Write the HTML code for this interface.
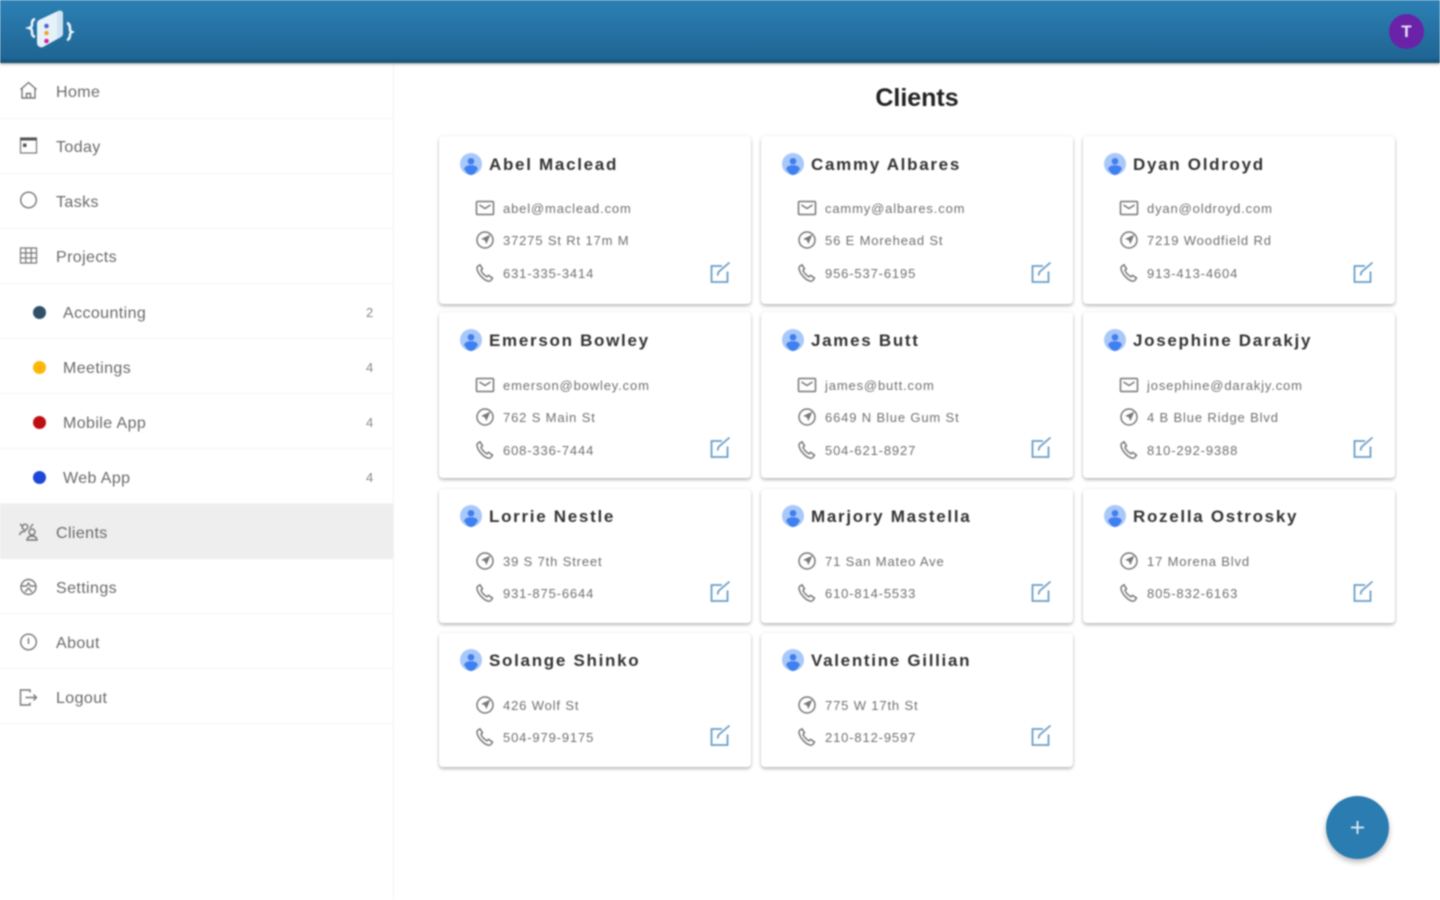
<!DOCTYPE html>
<html lang="en"><head><meta charset="utf-8"><title>Clients</title>
<style>
*{box-sizing:border-box}
html,body{margin:0;width:1440px;height:900px;overflow:hidden;background:#fff;font-family:"Liberation Sans",sans-serif}
#w{position:relative;width:1440px;height:900px;filter:blur(.7px);overflow:hidden}
.a{position:absolute}
header{position:absolute;left:0;top:0;width:1440px;height:63px;background:linear-gradient(#2c80b4,#1f6594 92%,#12516f);box-shadow:0 1px 3px rgba(0,0,0,.35);z-index:3}
aside{position:absolute;left:0;top:0;width:394px;height:900px;border-right:1px solid #f3f3f3}
.i{position:absolute;left:0;width:393px;height:55px;border-bottom:1px solid #f6f6f6;color:#6a6a6a;font-size:16px;letter-spacing:.4px}
.i span{position:absolute;left:56px;top:50%;transform:translateY(-50%);margin-top:2px;white-space:nowrap}
.i.s span{left:63px}
.i.d span{margin-top:3px}
.i svg{position:absolute;left:17px;top:15px;width:23px;height:23px;fill:none;stroke:#777;stroke-width:1.4}
.i.d svg{top:17px}
.i.k svg{top:16px}
.i i{position:absolute;left:33px;top:22px;width:13px;height:13px;border-radius:50%}
.i b{position:absolute;left:366px;top:21px;font-weight:normal;font-size:13px;letter-spacing:0;color:#888}
.c{position:absolute;width:312px;background:#fff;border-radius:4px;box-shadow:0 2px 3px rgba(0,0,0,.25),0 0 4px rgba(0,0,0,.07)}
.n{position:absolute;left:50px;margin-top:1px;font-weight:bold;font-size:17px;letter-spacing:1.7px;color:#333;white-space:nowrap;line-height:20px}
.t{position:absolute;left:64px;margin-top:1px;font-size:13px;letter-spacing:.85px;color:#707070;white-space:nowrap;line-height:16px}
.c svg{position:absolute;fill:none;stroke:#777;stroke-width:1.5}
.c svg.u{left:21px;width:22px;height:22px;stroke:none}
.c svg.m{left:36px;width:20px;height:20px}
.c svg.e{left:268px;width:26px;height:26px;stroke:#6a9fc8;stroke-width:1.8}
.c.r svg.e{left:267px}
</style></head><body>
<svg width="0" height="0" style="position:absolute">
<symbol id="u" viewBox="0 0 24 24"><circle cx="12" cy="12" r="12" fill="#a9c8fa"/><circle cx="12" cy="9" r="3.600" fill="#3f7ff0"/><path d="M4.500 17c1-2.600 4-3.600 7.500-3.600s6.500 1 7.500 3.600c-1.800 3.600-4.500 7-7.500 7s-5.700-3.400-7.500-7z" fill="#3f7ff0"/></symbol>
<symbol id="mail" viewBox="0 0 20 20"><rect x="1.500" y="3.500" width="17" height="13" rx="1"/><path d="M4.500 7l5.500 3.500L15.500 7"/></symbol>
<symbol id="loc" viewBox="0 0 20 20"><circle cx="10" cy="10" r="8"/><path d="M14 6l-6 2.800 2.400 1 1 2.400z" fill="#777"/></symbol>
<symbol id="ph" viewBox="0 0 20 20"><path d="M2.500 3.500L5 1.800l2.500 4-1.500 1.500c.8 2.500 3.500 5.300 6 6.500l1.600-1.500 3.900 2.800-1.700 2.400c-1 1-3 .8-5.300-.4C7 15 3.800 11 2.600 8 1.900 6 1.800 4.500 2.500 3.500z"/></symbol>
<symbol id="ed" viewBox="0 0 26 26"><path d="M15 6H4.500v16h16V11.500"/><path d="M10.500 15.500l1-3.500L22.500 2.500"/></symbol>
</svg>
<div id="w">
<header>
<svg class="a" style="left:24px;top:8px" width="54" height="44" viewBox="0 0 54 44">
<path d="M11 11c-3 1-3 3-3 5s0 3-3 4c3 1 3 2 3 4s0 4 3 5" fill="none" stroke="#eaf4fb" stroke-width="2.600"/>
<path d="M43 15c3 1 3 4 3 6s0 2 2 3c-2 1-2 2-2 3s0 4-3 5" fill="none" stroke="#eaf4fb" stroke-width="2.600"/>
<path d="M13 15c0-1 1-2 2-3l19-9c3-1 5 0 5 3v20c0 1-1 2-2 3l-18 10c-3 1-6-1-6-4z" fill="#e6f2fa"/>
<path d="M33 3.500c4-1 6 0 6 3v19c0 1-1 2-2 3l-4 2z" fill="#cfe4f1"/>
<circle cx="22.500" cy="18" r="2.300" fill="#4f63d8"/><circle cx="22.500" cy="25" r="2.300" fill="#f2a32c"/><circle cx="22.500" cy="33" r="2.300" fill="#d81e9a"/>
</svg>
<div class="a" style="left:1389px;top:14px;width:35px;height:35px;border-radius:50%;background:#6a22a8;color:#e9def5;font-size:17px;font-weight:bold;text-align:center;line-height:35px">T</div>
</header>
<aside>
<div class="i" style="top:64px"><svg viewBox="0 0 23 23"><path d="M3.500 10.500L11.500 3.500l8 7M5 9.500V19h13V9.500M9.500 19v-4.500h4V19"/></svg><span>Home</span></div>
<div class="i" style="top:119px"><svg viewBox="0 0 23 23"><rect x="3.500" y="4" width="16" height="15" stroke-width="1.200"/><path d="M3.500 5h16" stroke-width="3" stroke="#555"/><rect x="6" y="9.500" width="3.500" height="3.500" fill="#555" stroke="none"/></svg><span>Today</span></div>
<div class="i" style="top:174px"><svg viewBox="0 0 23 23"><circle cx="11.500" cy="11" r="7.800"/></svg><span>Tasks</span></div>
<div class="i" style="top:229px"><svg viewBox="0 0 23 23"><path d="M3.500 4h16v15h-16zM3.500 9h16M3.500 14h16M8.800 4v15M14.200 4v15" stroke-width="1.200"/></svg><span>Projects</span></div>
<div class="i s d" style="top:284px"><i style="background:#2f5068"></i><span>Accounting</span><b>2</b></div>
<div class="i s d" style="top:339px"><i style="background:#ffb707"></i><span>Meetings</span><b>4</b></div>
<div class="i s d" style="top:394px"><i style="background:#c00d12"></i><span>Mobile App</span><b>4</b></div>
<div class="i s d" style="top:449px"><i style="background:#1c47d8"></i><span>Web App</span><b>4</b></div>
<div class="i k" style="top:504px;background:#eee;border:0"><svg viewBox="0 0 23 23"><circle cx="8" cy="7" r="2.800"/><circle cx="15" cy="12" r="3"/><path d="M2.500 15c1-3 3-4 6-3.500M10 20c.5-3 2.500-4 5-4s4.500 1 5 4zM3 4l3 3M13 8l3-4"/></svg><span>Clients</span></div>
<div class="i d" style="top:559px"><svg viewBox="0 0 23 23"><circle cx="11.500" cy="11" r="7.500"/><path d="M4.500 10h5l2-3 2 3h5M8 16l3.500-4 3.500 4"/></svg><span>Settings</span></div>
<div class="i d" style="top:614px"><svg viewBox="0 0 23 23"><circle cx="11.500" cy="11" r="7.800"/><path d="M11.500 7v6"/></svg><span>About</span></div>
<div class="i d" style="top:669px"><svg viewBox="0 0 23 23"><path d="M13 6.500V4H3.500v15H13v-2.500M8.500 11.500h11M16.500 8.500l3 3-3 3"/></svg><span>Logout</span></div>
</aside>
<div class="a" style="left:394px;top:84px;width:1046px;text-align:center;font-size:25px;font-weight:bold;color:#222;line-height:28px">Clients</div>

<div class="c" style="left:439px;top:136px;height:168px"><svg class="u" style="top:17px"><use href="#u"/></svg><div class="n" style="top:18px">Abel Maclead</div>
<svg class="m" style="top:62px"><use href="#mail"/></svg><div class="t" style="top:64px">abel@maclead.com</div>
<svg class="m" style="top:94px"><use href="#loc"/></svg><div class="t" style="top:96px">37275 St Rt 17m M</div>
<svg class="m" style="top:127px"><use href="#ph"/></svg><div class="t" style="top:129px">631-335-3414</div>
<svg class="e" style="top:124px"><use href="#ed"/></svg></div>

<div class="c r" style="left:761px;top:136px;height:168px"><svg class="u" style="top:17px"><use href="#u"/></svg><div class="n" style="top:18px">Cammy Albares</div>
<svg class="m" style="top:62px"><use href="#mail"/></svg><div class="t" style="top:64px">cammy@albares.com</div>
<svg class="m" style="top:94px"><use href="#loc"/></svg><div class="t" style="top:96px">56 E Morehead St</div>
<svg class="m" style="top:127px"><use href="#ph"/></svg><div class="t" style="top:129px">956-537-6195</div>
<svg class="e" style="top:124px"><use href="#ed"/></svg></div>

<div class="c r" style="left:1083px;top:136px;height:168px"><svg class="u" style="top:17px"><use href="#u"/></svg><div class="n" style="top:18px">Dyan Oldroyd</div>
<svg class="m" style="top:62px"><use href="#mail"/></svg><div class="t" style="top:64px">dyan@oldroyd.com</div>
<svg class="m" style="top:94px"><use href="#loc"/></svg><div class="t" style="top:96px">7219 Woodfield Rd</div>
<svg class="m" style="top:127px"><use href="#ph"/></svg><div class="t" style="top:129px">913-413-4604</div>
<svg class="e" style="top:124px"><use href="#ed"/></svg></div>

<div class="c" style="left:439px;top:312px;height:166px"><svg class="u" style="top:17px"><use href="#u"/></svg><div class="n" style="top:18px">Emerson Bowley</div>
<svg class="m" style="top:63px"><use href="#mail"/></svg><div class="t" style="top:65px">emerson@bowley.com</div>
<svg class="m" style="top:95px"><use href="#loc"/></svg><div class="t" style="top:97px">762 S Main St</div>
<svg class="m" style="top:128px"><use href="#ph"/></svg><div class="t" style="top:130px">608-336-7444</div>
<svg class="e" style="top:123px"><use href="#ed"/></svg></div>

<div class="c r" style="left:761px;top:312px;height:166px"><svg class="u" style="top:17px"><use href="#u"/></svg><div class="n" style="top:18px">James Butt</div>
<svg class="m" style="top:63px"><use href="#mail"/></svg><div class="t" style="top:65px">james@butt.com</div>
<svg class="m" style="top:95px"><use href="#loc"/></svg><div class="t" style="top:97px">6649 N Blue Gum St</div>
<svg class="m" style="top:128px"><use href="#ph"/></svg><div class="t" style="top:130px">504-621-8927</div>
<svg class="e" style="top:123px"><use href="#ed"/></svg></div>

<div class="c r" style="left:1083px;top:312px;height:166px"><svg class="u" style="top:17px"><use href="#u"/></svg><div class="n" style="top:18px">Josephine Darakjy</div>
<svg class="m" style="top:63px"><use href="#mail"/></svg><div class="t" style="top:65px">josephine@darakjy.com</div>
<svg class="m" style="top:95px"><use href="#loc"/></svg><div class="t" style="top:97px">4 B Blue Ridge Blvd</div>
<svg class="m" style="top:128px"><use href="#ph"/></svg><div class="t" style="top:130px">810-292-9388</div>
<svg class="e" style="top:123px"><use href="#ed"/></svg></div>

<div class="c" style="left:439px;top:489px;height:134px"><svg class="u" style="top:16px"><use href="#u"/></svg><div class="n" style="top:17px">Lorrie Nestle</div>
<svg class="m" style="top:62px"><use href="#loc"/></svg><div class="t" style="top:64px">39 S 7th Street</div>
<svg class="m" style="top:94px"><use href="#ph"/></svg><div class="t" style="top:96px">931-875-6644</div>
<svg class="e" style="top:90px"><use href="#ed"/></svg></div>

<div class="c r" style="left:761px;top:489px;height:134px"><svg class="u" style="top:16px"><use href="#u"/></svg><div class="n" style="top:17px">Marjory Mastella</div>
<svg class="m" style="top:62px"><use href="#loc"/></svg><div class="t" style="top:64px">71 San Mateo Ave</div>
<svg class="m" style="top:94px"><use href="#ph"/></svg><div class="t" style="top:96px">610-814-5533</div>
<svg class="e" style="top:90px"><use href="#ed"/></svg></div>

<div class="c r" style="left:1083px;top:489px;height:134px"><svg class="u" style="top:16px"><use href="#u"/></svg><div class="n" style="top:17px">Rozella Ostrosky</div>
<svg class="m" style="top:62px"><use href="#loc"/></svg><div class="t" style="top:64px">17 Morena Blvd</div>
<svg class="m" style="top:94px"><use href="#ph"/></svg><div class="t" style="top:96px">805-832-6163</div>
<svg class="e" style="top:90px"><use href="#ed"/></svg></div>

<div class="c" style="left:439px;top:633px;height:134px"><svg class="u" style="top:16px"><use href="#u"/></svg><div class="n" style="top:17px">Solange Shinko</div>
<svg class="m" style="top:62px"><use href="#loc"/></svg><div class="t" style="top:64px">426 Wolf St</div>
<svg class="m" style="top:94px"><use href="#ph"/></svg><div class="t" style="top:96px">504-979-9175</div>
<svg class="e" style="top:90px"><use href="#ed"/></svg></div>

<div class="c r" style="left:761px;top:633px;height:134px"><svg class="u" style="top:16px"><use href="#u"/></svg><div class="n" style="top:17px">Valentine Gillian</div>
<svg class="m" style="top:62px"><use href="#loc"/></svg><div class="t" style="top:64px">775 W 17th St</div>
<svg class="m" style="top:94px"><use href="#ph"/></svg><div class="t" style="top:96px">210-812-9597</div>
<svg class="e" style="top:90px"><use href="#ed"/></svg></div>

<div class="a" style="left:1326px;top:796px;width:63px;height:63px;border-radius:50%;background:#2a7cb1;box-shadow:0 3px 6px rgba(0,0,0,.28)">
<svg class="a" style="left:21px;top:21px" width="21" height="21" viewBox="0 0 21 21"><path d="M10.500 4v13M4 10.500h13" stroke="#cfe3f0" stroke-width="2" fill="none"/></svg></div>
</div>
</body></html>
